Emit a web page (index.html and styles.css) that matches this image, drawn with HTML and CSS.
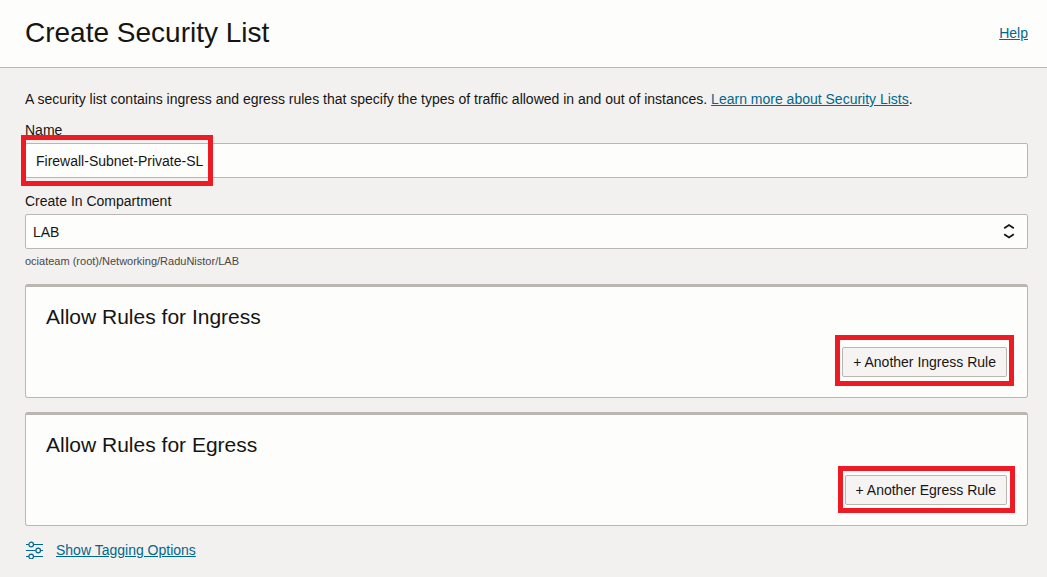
FILE: index.html
```html
<!DOCTYPE html>
<html lang="en">
<head>
<meta charset="utf-8">
<title>Create Security List</title>
<link rel="stylesheet" href="styles.css">
</head>
<body>
<header class="header">
  <h1 class="title">Create Security List</h1>
  <a class="link" href="#help">Help</a>
</header>
<main class="content">
  <p class="intro">A security list contains ingress and egress rules that specify the types of traffic allowed in and out of instances. <a class="link" href="#learn">Learn more about Security Lists</a>.</p>
  <form class="form">
    <div class="field">
      <label class="label" for="name">Name</label>
      <div class="control">
        <input class="box box-input" id="name" type="text" value="Firewall-Subnet-Private-SL">
        <span class="highlight highlight-name"></span>
      </div>
    </div>
    <div class="field">
      <label class="label" for="compartment">Create In Compartment</label>
      <div class="control">
        <select class="box box-select" id="compartment"><option>LAB</option></select>
        <svg class="chevrons" viewBox="0 0 12 16" aria-hidden="true"><path d="M1.2 5.2 6 2l4.8 3.2M1.2 11.3 6 14.5l4.8-3.2"/></svg>
      </div>
      <p class="hint">ociateam (root)/Networking/RaduNistor/LAB</p>
    </div>
    <section class="card">
      <h2 class="card-title">Allow Rules for Ingress</h2>
      <div class="action">
        <button class="button" type="button">+ Another Ingress Rule</button>
        <span class="highlight highlight-ingress"></span>
      </div>
    </section>
    <section class="card">
      <h2 class="card-title">Allow Rules for Egress</h2>
      <div class="action">
        <button class="button" type="button">+ Another Egress Rule</button>
        <span class="highlight highlight-egress"></span>
      </div>
    </section>
    <div class="tagging">
      <svg class="sliders" viewBox="0 0 18 18" aria-hidden="true"><path d="M0 3.5h3M8 3.5h9M0 9.5h9.5M14.500 9.500h2.500M0 15.500h3M8 15.500h9"/><circle cx="5.200" cy="3.500" r="2.300"/><circle cx="12.200" cy="9.500" r="2.300"/><circle cx="5.200" cy="15.500" r="2.300"/></svg>
      <a class="link" href="#tags">Show Tagging Options</a>
    </div>
  </form>
</main>
</body>
</html>
```

FILE: styles.css
```css
* {
  box-sizing: border-box;
}

body {
  margin: 0;
  background: #f3f1f0;
  color: #161513;
  font: 14px/20px "Liberation Sans", Arial, sans-serif;
}

.header {
  display: flex;
  align-items: center;
  justify-content: space-between;
  padding: 15px 19px 16px 25px;
  background: #fdfdfc;
  border-bottom: 1px solid #bcb6b1;
}

.title {
  margin: 0;
  font-size: 28px;
  line-height: 36px;
  font-weight: 400;
}

.link {
  color: #00688c;
  text-decoration: underline;
}

.content {
  padding: 21px 19px 16px 25px;
}

.intro {
  margin: 0 0 11px;
}

.field {
  margin-bottom: 13px;
}

.label {
  display: block;
  margin-bottom: 3px;
}

.control {
  position: relative;
}

.box {
  display: block;
  width: 100%;
  height: 35px;
  border: 1px solid #bcb6b1;
  border-radius: 2px;
  background: #fdfdfc;
  color: inherit;
  font: inherit;
}

.box-input {
  padding: 0 10px;
}

.box-select {
  appearance: none;
  padding: 0 7px;
}

.chevrons {
  position: absolute;
  top: 9px;
  right: 13px;
  width: 12px;
  height: 16px;
  fill: none;
  stroke: #161513;
  stroke-width: 1.8;
  pointer-events: none;
}

.hint {
  margin: 4px 0 15px;
  color: #4a4745;
  font-size: 11px;
  line-height: 16px;
}

.card {
  margin-bottom: 14px;
  padding: 16px 20px 20px;
  border: 1px solid #bcb6b1;
  border-top-width: 3px;
  border-radius: 3px;
  background: #fdfdfc;
}

.card-title {
  margin: 0 0 16px;
  font-size: 21px;
  line-height: 28px;
  font-weight: 400;
}

.action {
  position: relative;
  width: fit-content;
  margin-left: auto;
}

.button {
  display: block;
  height: 30px;
  padding: 0 10px;
  border: 1px solid #bcb6b1;
  border-radius: 2px;
  background: #f6f4f3;
  color: inherit;
  font: inherit;
}

.highlight {
  position: absolute;
  border: 5px solid #ed1c24;
  pointer-events: none;
}

.highlight-name {
  top: -8px;
  left: -4px;
  width: 192px;
  height: 51px;
}

.highlight-ingress {
  inset: -12px -7px -9px;
}

.highlight-egress {
  inset: -9px -8px -8px -7px;
}

.tagging {
  display: flex;
  align-items: center;
  gap: 12px;
}

.sliders {
  width: 18px;
  height: 18px;
  margin-left: 1px;
  fill: none;
  stroke: #00688c;
  stroke-width: 1.2;
}
```
